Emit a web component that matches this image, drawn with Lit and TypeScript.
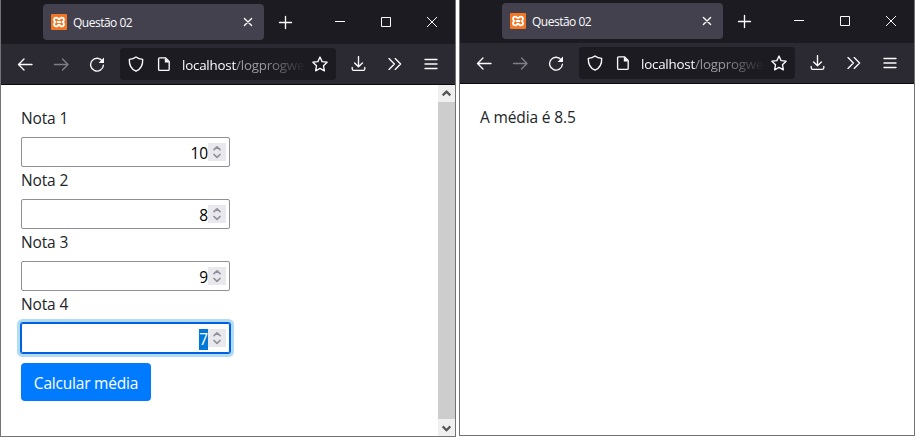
import { LitElement, html, svg, css, nothing } from "lit";
import { customElement, property } from "lit/decorators.js";

const icons: Record<string, unknown> = {
  back: svg`<path d="M15 8.5H1.5M7 3L1.5 8.5L7 14" />`,
  forward: svg`<path d="M1.5 8.5H15M9.5 3L15 8.5L9.5 14" />`,
  reload: svg`<path d="M13.4 5.2A6.4 6.4 0 1 0 14.4 9.2" /><path class="solid" d="M15 1.6V7H9.6Z" />`,
  shield: svg`<path d="M8 .9C6.3 2.3 3.8 3.2 1.3 3.4C1.1 9 3.2 13.1 8 15.2C12.8 13.1 14.9 9 14.7 3.4C12.2 3.2 9.7 2.3 8 .9Z" />`,
  page: svg`<path d="M3.6 1.8H9.4L13.2 5.6V13.2Q13.2 14.4 12 14.4H3.8Q2.6 14.4 2.6 13.2V2.8Q2.6 1.8 3.6 1.8Z" /><path class="solid" d="M8.8 1.8L13.4 6.4H8.8Z" />`,
  star: svg`<path d="M8 1L10.1 5.6L15.1 6.2L11.5 9.8L12.4 14.8L8 12.4L3.6 14.8L4.5 9.8L.9 6.2L5.9 5.6Z" />`,
  download: svg`<path d="M7.5 .6V10.6M3.6 6.9L7.5 10.8L11.4 6.9M1.2 11.5V12.8Q1.2 14.4 2.8 14.4H12.2Q13.8 14.4 13.8 12.8V11.5" />`,
  more: svg`<path d="M2 2.6L7.4 8L2 13.4M8.2 2.6L13.6 8L8.2 13.4" />`,
  menu: svg`<path d="M2 3.5H14M2 8H14M2 12.5H14" />`,
  closeTab: svg`<path d="M4.4 4.4L11.6 11.6M11.6 4.4L4.4 11.6" />`,
  plus: svg`<path d="M8.5 2.5V14.5M2.5 8.5H14.5" />`,
  minimize: svg`<path class="thin" d="M3 7.5H13" />`,
  maximize: svg`<path class="thin" d="M3.5 3.5H12.5V12.5H3.5Z" />`,
  close: svg`<path class="thin" d="M3 3L13 13M13 3L3 13" />`,
};

const icon = (name: string, extra = "") =>
  html`<svg class="icon ${extra}" viewBox="0 0 16 16">${icons[name]}</svg>`;

@customElement("browser-window")
class BrowserWindow extends LitElement {
  @property({ type: Boolean }) scrollbar = false;

  static styles = css`
    :host {
      display: flex;
      flex-direction: column;
      box-sizing: border-box;
      border: 1px solid #737373;
      border-top: 0;
      background: #fff;
      overflow: hidden;
    }
    .icon {
      width: 16px;
      height: 16px;
      flex: none;
      fill: none;
      stroke: #fbfbfe;
      stroke-width: 1.35;
      stroke-linecap: round;
      stroke-linejoin: round;
      display: block;
    }
    .solid { fill: #fbfbfe; stroke: none; }
    .thin { stroke-width: 1; stroke-linecap: butt; stroke-linejoin: miter; }
    .dim { opacity: 0.4; }
    .tabs {
      height: 44px;
      flex: none;
      background: #1c1b22;
      display: flex;
      align-items: center;
      padding: 0 10px 0 42px;
    }
    .tab {
      width: 221px;
      height: 36px;
      box-sizing: border-box;
      background: #42414d;
      border-radius: 4px;
      display: flex;
      align-items: center;
      padding: 0 8px;
    }
    .favicon { width: 16px; height: 16px; flex: none; }
    .title {
      flex: 1;
      margin-left: 6px;
      padding-top: 2px;
      font: 12px/16px "Open Sans", sans-serif;
      letter-spacing: -0.5px;
      color: #fbfbfe;
    }
    .plus { margin-left: 13px; }
    .controls { display: flex; gap: 30px; margin-left: auto; padding-right: 5px; }
    .toolbar {
      height: 40px;
      flex: none;
      background: #2b2a33;
      border-bottom: 1px solid #0c0c0d;
      display: flex;
      align-items: center;
      padding: 0 16px;
      gap: 20px;
    }
    .address {
      width: 216px;
      height: 32px;
      box-sizing: border-box;
      margin: 0 -5px;
      background: #1c1b22;
      border-radius: 4px;
      display: flex;
      align-items: center;
      padding: 0 8px;
      gap: 12px;
    }
    .url {
      flex: 1;
      margin: 0 -10px 0 -2px;
      padding-top: 2px;
      white-space: nowrap;
      font: 13.33px/20px "Open Sans", sans-serif;
      letter-spacing: -0.2px;
      color: #9b9ba1;
      mask-image: linear-gradient(to right, #000 calc(100% - 46px), transparent calc(100% - 4px));
    }
    .host { color: #fbfbfe; }
    .view { flex: 1; min-height: 0; display: flex; }
    .content { flex: 1; }
    .scroll {
      width: 17px;
      background: #f0f0f0;
      display: flex;
      flex-direction: column;
    }
    .thumb { flex: 1; background: #cdcdcd; }
    .scroll svg {
      width: 17px;
      height: 17px;
      fill: none;
      stroke: #555;
      stroke-width: 2.2;
      display: block;
    }
  `;

  render() {
    return html`
      <div class="tabs">
        <div class="tab">
          <svg class="favicon" viewBox="0 0 16 16">
            <rect width="16" height="16" rx="1" fill="#f37623" />
            <path
              d="M5.2 3.6C2.6 3.6 2.4 6.6 4.2 8C2.4 9.4 2.6 12.4 5.2 12.4C6.8 12.4 6.8 10.8 8 10.8S9.2 12.4 10.8 12.4C13.4 12.4 13.6 9.4 11.8 8C13.6 6.6 13.4 3.6 10.8 3.6C9.2 3.6 9.2 5.2 8 5.2S6.8 3.6 5.2 3.6ZM5.8 8H10.2"
              fill="none" stroke="#fff" stroke-width="1.9" stroke-linejoin="round" />
          </svg>
          <span class="title">Questão 02</span>
          ${icon("closeTab")}
        </div>
        ${icon("plus", "plus")}
        <div class="controls">${icon("minimize")}${icon("maximize")}${icon("close")}</div>
      </div>
      <div class="toolbar">
        ${icon("back")}${icon("forward", "dim")}${icon("reload")}
        <div class="address">
          ${icon("shield")}${icon("page")}
          <span class="url"><span class="host">localhost</span>/logprogwe</span>
          ${icon("star")}
        </div>
        ${icon("download")}${icon("more")}${icon("menu")}
      </div>
      <div class="view">
        <div class="content"><slot></slot></div>
        ${this.scrollbar
          ? html`<div class="scroll">
              <svg viewBox="0 0 17 17"><path d="M4.7 10.4L8.5 6.6L12.3 10.4" /></svg>
              <div class="thumb"></div>
              <svg viewBox="0 0 17 17"><path d="M4.7 7.4L8.5 11.2L12.3 7.4" /></svg>
            </div>`
          : nothing}
      </div>
    `;
  }
}

@customElement("app-root")
class AppRoot extends LitElement {
  static styles = css`
    :host {
      display: flex;
      gap: 3px;
      align-items: flex-start;
      height: 444px;
      overflow: hidden;
      background: #fff;
      font: 15.5px/24px "Open Sans", sans-serif;
      letter-spacing: -0.14px;
      color: #212529;
    }
    browser-window { width: 456px; height: 437px; flex: none; }
    .result { margin-top: -1px; }
    .form { padding: 21px 20px 0; }
    .label { display: block; height: 24px; }
    .field {
      box-sizing: border-box;
      width: 209px;
      height: 30px;
      margin: 7px 0 1px;
      border: 1px solid #8f8f9d;
      border-radius: 2px;
      display: flex;
      justify-content: flex-end;
      align-items: center;
      padding-right: 3px;
      color: #000;
    }
    .focused {
      border-color: #0060df;
      box-shadow: 0 0 0 1px #0060df, 0 0 0 4px #b0dcf5;
    }
    .value { line-height: 21px; margin-top: 2px; }
    .focused .value { background: #0078d7; color: #fff; }
    .spin {
      width: 18px;
      height: 18px;
      margin-bottom: 2px;
      margin-top: 1px;
      background: #e9e9ed;
      fill: none;
      stroke: #8f8f9d;
      stroke-width: 1.7;
      stroke-linecap: round;
      stroke-linejoin: round;
    }
    .button {
      width: 130px;
      height: 38px;
      margin-top: 10px;
      border-radius: 4px;
      background: #007bff;
      color: #fff;
      display: flex;
      align-items: center;
      justify-content: center;
      padding-top: 2px;
      box-sizing: border-box;
      letter-spacing: -0.2px;
    }
    .answer { padding: 21px 20px; }
  `;

  render() {
    const grades = [10, 8, 9, 7];
    return html`
      <browser-window scrollbar>
        <div class="form">
          ${grades.map(
            (grade, i) => html`
              <label class="label">Nota ${i + 1}</label>
              <div class="field ${i === 3 ? "focused" : ""}">
                <span class="value">${grade}</span>
                <svg class="spin" viewBox="0 0 18 18">
                  <path d="M6 6.7L9 3.9L12 6.7M6 11.5L9 14.3L12 11.5" />
                </svg>
              </div>
            `
          )}
          <div class="button">Calcular média</div>
        </div>
      </browser-window>
      <browser-window class="result">
        <div class="answer">A média é 8.5</div>
      </browser-window>
    `;
  }
}
